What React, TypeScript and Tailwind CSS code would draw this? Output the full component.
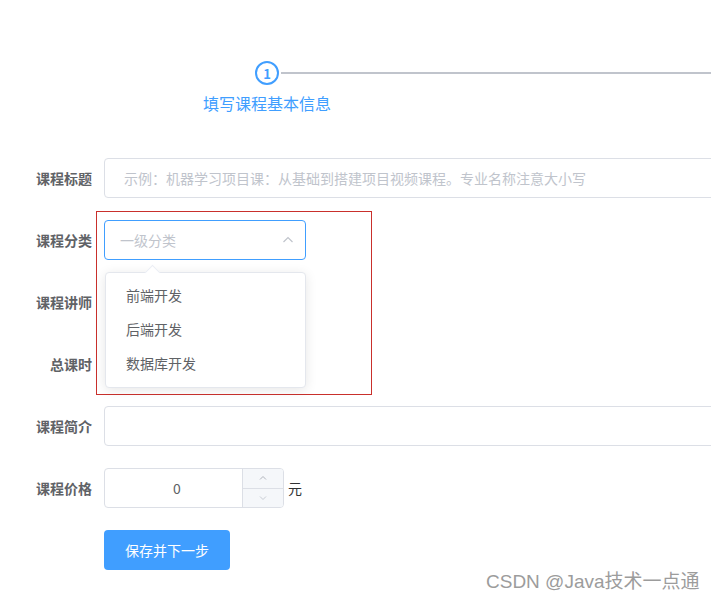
import React from "react";

const font = { fontFamily: '"Noto Sans CJK SC", "Noto Sans", sans-serif' };

function Row({ label, children }: { label: string; children?: React.ReactNode }) {
  return (
    <div className="flex mb-[22px] h-[40px]">
      <div className="w-[104px] pr-[12px] text-right text-[14px] leading-[40px] font-bold text-[#606266] shrink-0">
        {label}
      </div>
      <div className="flex items-center relative">{children}</div>
    </div>
  );
}

export default function App() {
  return (
    <div
      className="w-[711px] h-[603px] bg-white relative overflow-hidden"
      style={font}
    >
      {/* Steps */}
      <div className="pt-[61px]">
        <div className="flex items-center ml-[255px]">
          <div className="w-[24px] h-[24px] rounded-full border-2 border-[#409eff] flex items-center justify-center text-[#409eff] text-[13px] font-bold leading-none shrink-0">
            1
          </div>
          <div className="flex-1 h-[2px] bg-[#c0c4cc] ml-[2px]" />
        </div>
        <div className="ml-[167px] w-[200px] text-center mt-[7px] text-[16px] leading-[22px] text-[#409eff]">
          填写课程基本信息
        </div>
      </div>

      {/* Form */}
      <div className="mt-[44px]">
        <Row label="课程标题">
          <div className="w-[640px] h-[40px] border border-[#dcdfe6] rounded-[4px] flex items-center pl-[19px] text-[14px] text-[#c0c4cc]">
            示例：机器学习项目课：从基础到搭建项目视频课程。专业名称注意大小写
          </div>
        </Row>
        <Row label="课程分类">
          <div className="relative">
            <div className="w-[202px] h-[40px] border border-[#409eff] rounded-[4px] flex items-center justify-between pl-[15px] pr-[10px] text-[14px] text-[#c0c4cc]">
              <span>一级分类</span>
              <svg width="14" height="14" viewBox="0 0 14 14" fill="none">
                <path d="M2.5 9L7 4.5L11.5 9" stroke="#c0c4cc" strokeWidth="1.2" />
              </svg>
            </div>
            <div className="absolute left-[1px] top-[52px] w-[201px] bg-white border border-[#e4e7ed] rounded-[4px] shadow-[0_2px_12px_0_rgba(0,0,0,0.1)] py-[6px] z-10">
              <div className="absolute -top-[6px] left-[41px] w-[11px] h-[11px] bg-white border-l border-t border-[#ebeef5] rotate-45" />
              {["前端开发", "后端开发", "数据库开发"].map((t) => (
                <div
                  key={t}
                  className="h-[34px] leading-[33px] px-[20px] text-[14px] text-[#606266] relative"
                >
                  {t}
                </div>
              ))}
            </div>
          </div>
        </Row>
        <Row label="课程讲师" />
        <Row label="总课时" />
        <Row label="课程简介">
          <div className="w-[640px] h-[40px] border border-[#dcdfe6] rounded-[4px]" />
        </Row>
        <Row label="课程价格">
          <div className="w-[180px] h-[40px] border border-[#dcdfe6] rounded-[4px] flex overflow-hidden">
            <div className="flex-1 flex items-center justify-center pl-[7px] text-[14px] text-[#606266]">
              0
            </div>
            <div className="w-[41px] border-l border-[#dcdfe6] bg-[#f5f7fa] flex flex-col">
              <div className="flex-1 flex items-center justify-center border-b border-[#dcdfe6]">
                <svg width="10" height="10" viewBox="0 0 10 10" fill="none">
                  <path d="M2 6.5L5 3.5L8 6.5" stroke="#b0b4bc" strokeWidth="1" />
                </svg>
              </div>
              <div className="flex-1 flex items-center justify-center">
                <svg width="10" height="10" viewBox="0 0 10 10" fill="none">
                  <path d="M2 3.5L5 6.5L8 3.5" stroke="#c8ccd4" strokeWidth="1" />
                </svg>
              </div>
            </div>
          </div>
          <span className="ml-[4px] text-[14px] text-[#303133]">元</span>
        </Row>
        <div className="flex">
          <div className="w-[104px]" />
          <button className="w-[126px] h-[40px] bg-[#409eff] rounded-[4px] text-white text-[14px]">
            保存并下一步
          </button>
        </div>
      </div>

      {/* annotation rectangle */}
      <div className="absolute left-[96px] top-[211px] w-[276px] h-[184px] border border-[#c9302c] pointer-events-none" />

      {/* watermark */}
      <div
        className="absolute left-[486px] top-[569px] text-[19px] leading-[26px] text-[#9c9c9c] whitespace-nowrap"
        style={{ fontFamily: '"Liberation Sans", "Noto Sans CJK SC", sans-serif' }}
      >
        CSDN @Java技术一点通
      </div>
    </div>
  );
}
